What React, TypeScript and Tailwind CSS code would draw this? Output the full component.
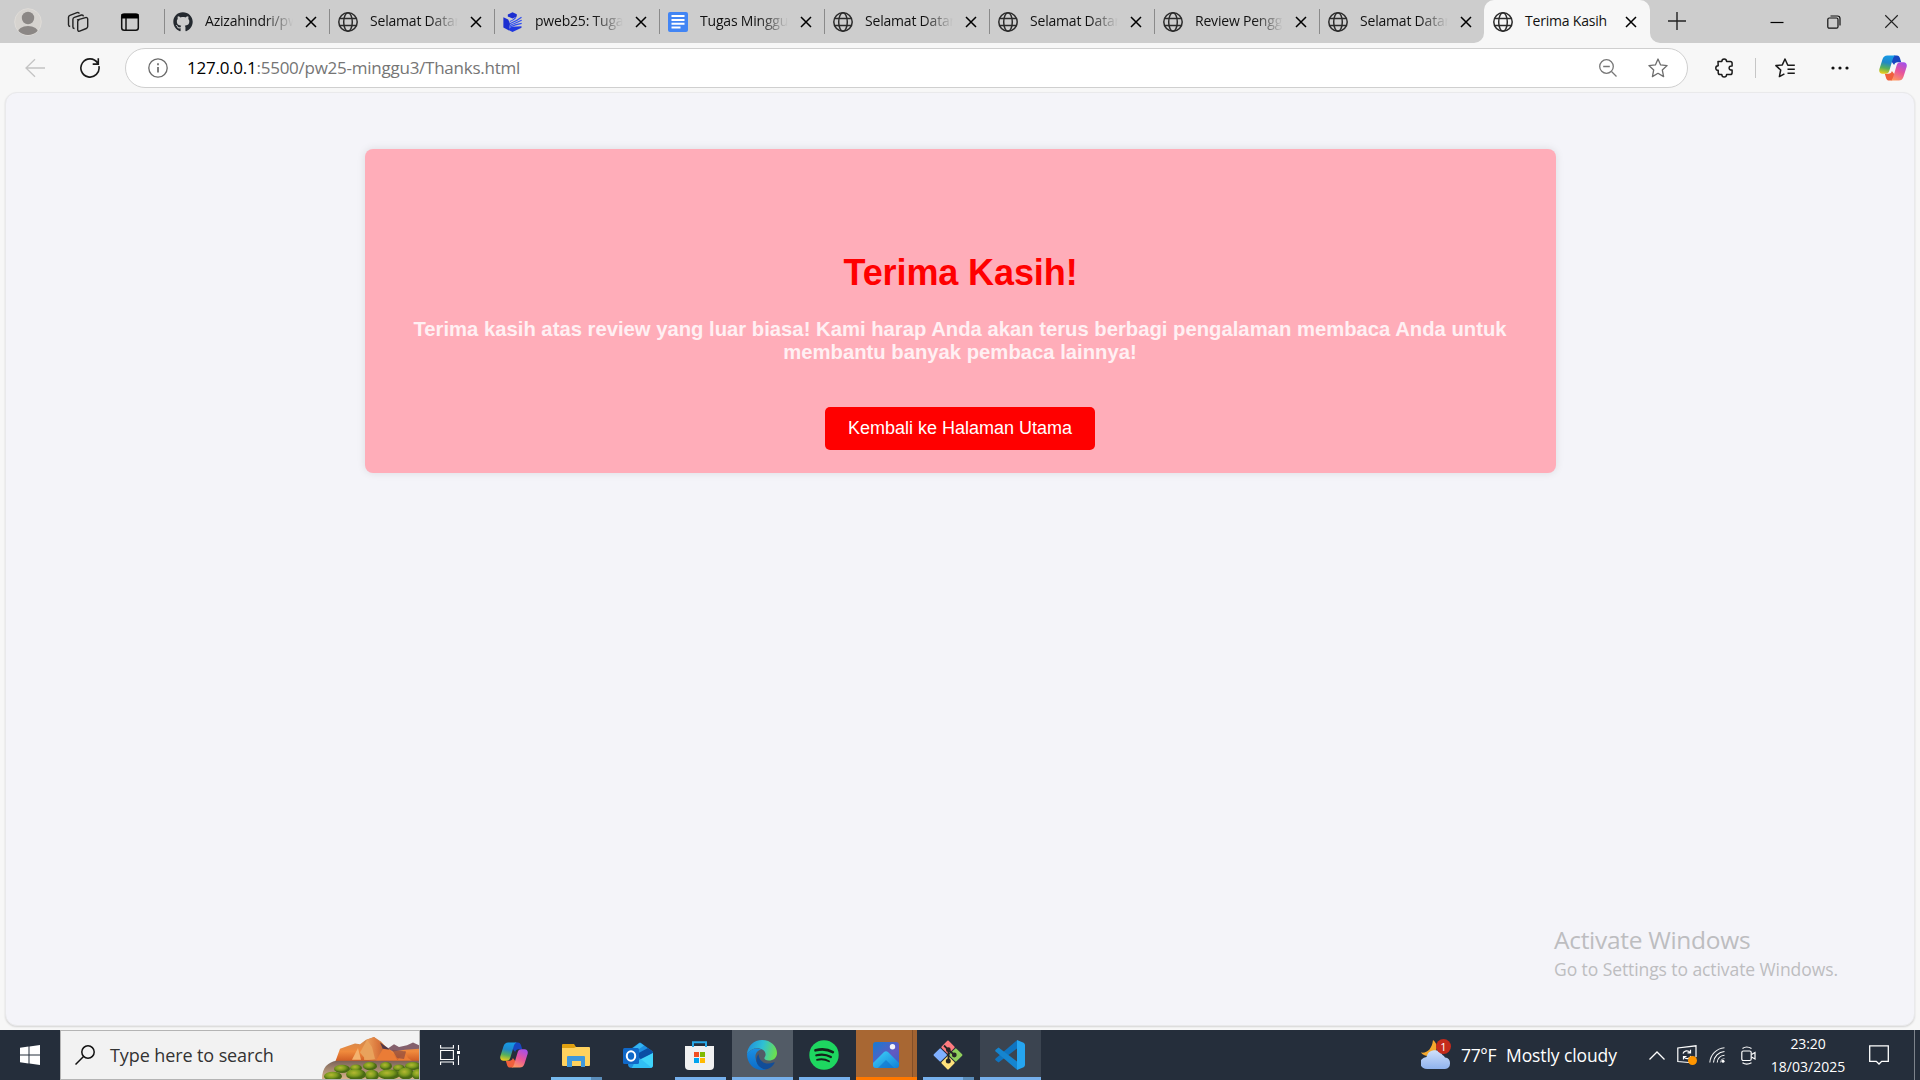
import React from "react";
import { FaGithub } from "react-icons/fa";

type P = { className?: string };

const Globe = () => (
  <svg viewBox="0 0 20 20" className="size-5" fill="none" stroke="#2b2b2b" strokeWidth="1.5">
    <circle cx="10" cy="10" r="9.2" />
    <ellipse cx="10" cy="10" rx="4.3" ry="9.2" />
    <path d="M1.7 6.6h16.6M1.7 13.4h16.6" />
  </svg>
);

const Pweb = () => (
  <svg viewBox="0 0 20 20" className="size-5">
    <path d="M4.800 2.500 9.500.2l4.300 2v2.300L9.500 6.500l-4.700-2z" fill="#1c2fd0" />
    <path d="M.4 5.200 5.200 7.500 7 11.500l-1 7L.4 15.500z" fill="#1c2fd0" />
    <path d="M6.500 16 9 14.800l9.500-.6v1.500L9.500 20l-4-2z" fill="#2038e0" />
    <g stroke="#2f4df2" fill="none" strokeWidth="1.200">
      <path d="M6.800 9.500C9 8.800 11 7.500 13 5.300" /><path d="M6.800 11.800C11 10 15 8 18.500 5.200" /><path d="M6.800 13.600C11 11.500 15 10 18.700 8.300" /><path d="M6.500 15.200C11 13 15 12 18.700 11.400" />
    </g>
  </svg>
);

const Docs = () => (
  <svg viewBox="0 0 20 20" className="size-5">
    <rect width="20" height="20" rx="2" fill="#4285f4" />
    <path d="M3.500 4h13M3.500 8h13M3.500 11.700h13M3.500 15.500h9" stroke="#fff" strokeWidth="1.900" />
  </svg>
);

const Cross = ({ className = "" }: P) => (
  <svg viewBox="0 0 12 12" className={className} fill="none" stroke="currentColor" strokeWidth="1.500">
    <path d="m1 1 10 10M11 1 1 11" />
  </svg>
);

const CopilotIcon = ({ id, className = "" }: { id: string; className?: string }) => (
  <svg viewBox="0 0 28 26" className={className}>
    <defs>
      <linearGradient id={id + "a"} x1=".55" y1="0" x2=".35" y2="1">
        <stop offset="0" stopColor="#159be8" />
        <stop offset=".4" stopColor="#2088c8" />
        <stop offset=".7" stopColor="#56b05c" />
        <stop offset="1" stopColor="#e8cc1c" />
      </linearGradient>
      <linearGradient id={id + "b"} x1=".75" y1="0" x2=".3" y2="1">
        <stop offset="0" stopColor="#a550e8" />
        <stop offset=".5" stopColor="#e8559a" />
        <stop offset="1" stopColor="#ff9860" />
      </linearGradient>
    </defs>
    <path d="M15 .4h2.800c1.900 0 2.700 1.200 3.200 2.900l1.200 4h-3.600c-2 0-2.900 1-3.500 2.800L12 6z" fill="#1846c0" />
    <path d="M13 25.600h-2.800c-1.900 0-2.700-1.200-3.200-2.900l-1.200-4h3.600c2 0 2.900-1 3.500-2.800L16 20z" fill="#f0603c" />
    <path d="M8.200.4h8.600c-1.600.3-2.400 1.600-3 3.600l-3.400 11.400c-.7 2.200-1.700 3.300-3.900 3.300H3.400C.8 18.700-.3 16.600.4 14L3.600 4C4.400 1.600 5.900.4 8.200.4z" fill={`url(#${id}a)`} />
    <path d="M19.800 25.600h-8.600c1.600-.3 2.400-1.600 3-3.600l3.400-11.400c.7-2.200 1.700-3.300 3.900-3.300h3.100c2.600 0 3.700 2.100 3 4.700L24.400 22c-.8 2.400-2.300 3.600-4.600 3.600z" fill={`url(#${id}b)`} />
  </svg>
);

type TabInfo = { title: string; icon: React.ReactNode; active?: boolean };
const tabs: TabInfo[] = [
  { title: "Azizahindri/pw", icon: <FaGithub size={20} color="#24292f" /> },
  { title: "Selamat Datan", icon: <Globe /> },
  { title: "pweb25: Tugas", icon: <Pweb /> },
  { title: "Tugas Minggu", icon: <Docs /> },
  { title: "Selamat Datan", icon: <Globe /> },
  { title: "Selamat Datan", icon: <Globe /> },
  { title: "Review Pengg", icon: <Globe /> },
  { title: "Selamat Datan", icon: <Globe /> },
  { title: "Terima Kasih", icon: <Globe />, active: true },
];

const Tab = ({ title, icon, active }: TabInfo) => (
  <div className={active ? "relative flex h-[43px] w-[166px] shrink-0 items-center rounded-t-[10px] bg-[#f7f7f7]" : "flex h-[43px] w-[165px] shrink-0 items-center"}>
    <div className={active ? "h-6 w-px" : "h-[25px] w-px bg-[#8a8a8a]"} />
    {active && (
      <>
        <svg viewBox="0 0 10 10" className="absolute bottom-0 -left-2.5 size-2.5"><path d="M10 0v10H0A10 10 0 0 0 10 0z" fill="#f7f7f7" /></svg>
        <svg viewBox="0 0 10 10" className="absolute bottom-0 -right-2.5 size-2.5"><path d="M0 0v10h10A10 10 0 0 1 0 0z" fill="#f7f7f7" /></svg>
      </>
    )}
    <div className="ml-2 size-5 shrink-0">{icon}</div>
    <div className={active
      ? "mb-0.5 ml-3 w-[89px] text-[14px] tracking-[-0.2px] whitespace-nowrap text-[#111]"
      : "mb-0.5 ml-3 w-[89px] overflow-hidden text-[14px] tracking-[-0.2px] whitespace-nowrap text-[#111] [mask-image:linear-gradient(to_right,black_66%,transparent_99%)]"}>
      {title}
    </div>
    <Cross className="ml-[11px] size-[12px] shrink-0" />
  </div>
);

const TabStrip = () => (
  <div className="flex h-[43px] items-center bg-[#cdcdcd]">
    <div className="flex w-[164px] shrink-0 items-center">
      <svg viewBox="0 0 28 28" className="ml-3.5 size-7">
        <defs><clipPath id="avatar"><circle cx="14" cy="14" r="13" /></clipPath></defs>
        <circle cx="14" cy="14" r="13.300" fill="#d6d3cf" stroke="#dfdcd8" />
        <g clipPath="url(#avatar)" fill="#8b8785"><circle cx="14" cy="10" r="6.200" /><ellipse cx="14" cy="25" rx="10.500" ry="7" /></g>
      </svg>
      <svg viewBox="0 0 22 22" className="ml-[25px] size-[22px]" fill="none" stroke="#222" strokeWidth="1.400" strokeLinejoin="round">
        <path d="m10.500 8.800 8-2.200q2-.4 2.200 1.400v7.600q0 1.400-1.400 1.900l-6.600 2.700q-1.800.5-2-1.400v-8q0-1.500 1.400-2z" />
        <path d="M7.500 17.500q-1.600 0-1.600-1.500V8.500q0-1.600 1.500-2.100L14.500 4q1.700-.3 2 1.300" />
        <path d="M3.200 15.500q-1.700-.2-1.700-1.700V6.300q0-1.500 1.400-2L10 1.600q1.800-.5 2.400 1" />
      </svg>
      <svg viewBox="0 0 20 20" className="ml-[31px] size-5" fill="none" stroke="#111" strokeWidth="1.500">
        <rect x="1.700" y="2" width="16.600" height="16.300" rx="2.500" /><path d="M1.500 2h17v4.500h-17z" fill="#000" stroke="none" /><path d="M6 6v12" />
      </svg>
    </div>
    {tabs.map((t, i) => <Tab key={i} {...t} />)}
    <svg viewBox="0 0 18 18" className="mb-0.5 ml-[18px] size-[18px]" stroke="#222" strokeWidth="1.400"><path d="M9 0v18M0 9h18" /></svg>
    <div className="ml-auto flex items-center pr-[21px]">
      <svg viewBox="0 0 14 14" className="size-3.5" stroke="#000" strokeWidth="1.200"><path d="M.5 7.500h13" /></svg>
      <svg viewBox="0 0 14 14" className="ml-[43px] size-3.5" fill="none" stroke="#111" strokeWidth="1.200">
        <rect x=".8" y="3" width="10.200" height="10.200" rx="1.500" /><path d="M3.500 1h7q2.500 0 2.500 2.500v7" />
      </svg>
      <Cross className="ml-[43px] size-[15px] text-[#222] [stroke-width:0.9]" />
    </div>
  </div>
);

const Toolbar = () => (
  <div className="flex h-[49px] items-center bg-[#f7f7f7]">
    <svg viewBox="0 0 20 20" className="ml-[25px] size-5" fill="none" stroke="#c4c4c4" strokeWidth="1.300"><path d="M20 10H1M10 1.300 1 10l9 8.700" /></svg>
    <svg viewBox="0 0 20 20" className="ml-[35px] size-5" fill="none" stroke="#1a1a1a" strokeWidth="1.600"><path d="M18.900 8.200A9.100 9.100 0 1 1 17.600 5M18.300.3v5.800h-5.600" /></svg>
    <div className="ml-[25px] flex h-10 w-[1563px] items-center rounded-full border border-[#cfcfcf] bg-white">
      <svg viewBox="0 0 20 20" className="ml-[22px] size-5" fill="none" stroke="#6a6a6a" strokeWidth="1.300"><circle cx="10" cy="10" r="9.200" /><path d="M10 9v5.500M10 5.200v2" strokeWidth="1.700" /></svg>
      <div className="ml-[19px] text-[17px] tracking-[-0.25px] whitespace-nowrap text-[#757575]"><span className="text-black">127.0.0.1</span>:5500/pw25-minggu3/Thanks.html</div>
      <svg viewBox="0 0 18 18" className="ml-auto size-[18px]" fill="none" stroke="#777" strokeWidth="1.300"><circle cx="7.500" cy="7.500" r="6.800" /><path d="M4.200 7.500h6.600M12.500 12.500l5 5" /></svg>
      <svg viewBox="0 0 20 20" className="mr-[19px] ml-[31px] size-5" fill="none" stroke="#6d6d6d" strokeWidth="1.300" strokeLinejoin="round"><path d="m10 1 2.600 5.900 6.500.7-4.800 4.400 1.300 6.600L10 15.300l-5.600 3.300L5.700 12 .9 7.600l6.500-.7z" /></svg>
    </div>
    <svg viewBox="0 0 20 20" className="ml-[27px] size-5" fill="none" stroke="#1a1a1a" strokeWidth="1.500" strokeLinejoin="round">
      <path d="M3 3.500h3.800C6.900 1.800 7.800.9 9.200.9s2.300.9 2.400 2.600h3.700q1.800 0 1.800 1.800v2.600c-2-.1-3 .7-3 2.100s1 2.200 3 2.100v2.600q0 1.800-1.800 1.800h-3.700c-.1 1.700-1 2.600-2.400 2.600s-2.300-.9-2.400-2.600H5q-1.800 0-1.800-1.800v-2.400C1.500 12.300.8 11.400.8 10s.8-2.300 2.400-2.300z" />
    </svg>
    <div className="ml-5 h-5 w-px bg-[#c6c6c6]" />
    <svg viewBox="0 0 20 20" className="ml-[19px] size-5" fill="none" stroke="#1a1a1a" strokeWidth="1.500" strokeLinejoin="round"><path d="M19.800 7.200h-7L10 1 7.300 6.900l-6.400.7 4.800 4.400-1.300 6.600 5-2.800M12.500 11.200h7.300M12.500 15.200h7.300" /></svg>
    <svg viewBox="0 0 18 4" className="ml-9 h-1 w-[18px]" fill="#111"><circle cx="2" cy="2" r="1.600" /><circle cx="9" cy="2" r="1.600" /><circle cx="16" cy="2" r="1.600" /></svg>
    <CopilotIcon id="cpt" className="ml-[30px] h-[26px] w-7" />
  </div>
);

const Page = () => (
  <div className="flex-1 bg-[#f7f7f7] px-[5px] pb-1">
    <div className="flex h-full flex-col rounded-xl border border-[#e9e9eb] bg-[#f4f4f9] shadow-[0_1px_2px_rgba(0,0,0,0.14)]">
      <main className="mx-auto mt-14 flex h-[324px] w-[1191px] flex-col items-center rounded-lg bg-[#ffadb9] px-10 pt-[103px] text-center font-['Liberation_Sans',Arial,sans-serif] shadow-[0_0_9px_rgba(0,0,0,0.1)]">
        <h1 className="pl-px text-[36px] leading-[41px] font-bold tracking-[-0.1px] text-[#ff0000]">Terima Kasih!</h1>
        <p className="mt-[25px] text-[20.25px] leading-[23px] font-bold text-[#fff0f3]">
          Terima kasih atas review yang luar biasa! Kami harap Anda akan terus berbagi pengalaman membaca Anda untuk<br />membantu banyak pembaca lainnya!
        </p>
        <button className="mt-[43px] h-[43px] w-[270px] rounded-[5px] bg-[#ff0000] text-[18px] text-white">Kembali ke Halaman Utama</button>
      </main>
      <div className="mt-auto mr-[76px] mb-[43px] w-[284px] self-end whitespace-nowrap text-[#bdbdc0]">
        <div className="mb-px text-[24.5px] leading-[33px] tracking-[-0.3px]">Activate Windows</div>
        <div className="text-[17.500px] leading-[25px] tracking-[-0.08px]">Go to Settings to activate Windows.</div>
      </div>
    </div>
  </div>
);

const Mountains = () => (
  <svg viewBox="0 0 97 46" preserveAspectRatio="none" className="ml-auto h-[42px] w-[97px] self-end">
    <defs>
      <linearGradient id="rock" x1="0" y1="0" x2="0" y2="1"><stop offset="0" stopColor="#c98a55" /><stop offset=".55" stopColor="#f08a3c" /><stop offset="1" stopColor="#c8501e" /></linearGradient>
      <linearGradient id="rock2" x1="0" y1="0" x2="1" y2="0"><stop offset="0" stopColor="#f0a860" /><stop offset=".6" stopColor="#d9743a" /><stop offset="1" stopColor="#a8603c" /></linearGradient>
      <linearGradient id="earth" x1="0" y1="0" x2="0" y2="1"><stop offset="0" stopColor="#7a6258" /><stop offset="1" stopColor="#d8b48c" /></linearGradient>
      <radialGradient id="bush" cx=".4" cy=".35"><stop offset="0" stopColor="#b5b832" /><stop offset=".6" stopColor="#7d9c1e" /><stop offset="1" stopColor="#4a6a14" /></radialGradient>
    </defs>
    <path d="M64 14 72 8l5 3 8-2 6-3 6 3v9H64z" fill="#84606c" />
    <path d="M13 28 18 13l7-3 8-3 5 1 6-5 8-3 7 5 6 7 6 4 12-2 14-1v16z" fill="url(#rock)" />
    <path d="M42 25 45 3l7-3 8 7 6 8-7 11z" fill="url(#rock2)" />
    <path d="m45 3 5 8 3 13-9 1-6-8z" fill="#e9a25c" /><path d="m58 6 8 6 3 5-7-1z" fill="#533846" />
    <path d="m54 26 7-13 7 1 8 12zM75 26l8-11 3 8 4 3z" fill="#ea7c36" />
    <path d="m70 14 5 9 7 1 2-8z" fill="#8c4c40" opacity=".7" />
    <path d="M30 25 36 12l3 13z" fill="#f4b26e" />
    <path d="M0 46C0 33 6 28 14 26h83v20z" fill="url(#earth)" />
    <g fill="url(#bush)">
      <ellipse cx="20" cy="35" rx="8" ry="4.500" /><ellipse cx="48" cy="32" rx="7" ry="4.500" /><ellipse cx="64" cy="32" rx="6" ry="4.500" /><ellipse cx="91" cy="32" rx="8" ry="4.500" /><ellipse cx="34" cy="34" rx="6" ry="4" /><ellipse cx="77" cy="34" rx="6" ry="4" />
      <ellipse cx="11" cy="43" rx="9" ry="5" /><ellipse cx="50" cy="42" rx="7" ry="6" /><ellipse cx="34" cy="41" rx="10" ry="6" /><ellipse cx="67" cy="41" rx="11" ry="5.500" /><ellipse cx="84" cy="40" rx="8" ry="6.500" /><ellipse cx="96" cy="41" rx="6" ry="6" />
    </g>
  </svg>
);

const TaskView = () => (
  <svg viewBox="0 0 20 20" className="size-5" fill="none" stroke="#fff" strokeWidth="1.100">
    <path d="M.6 5.500h12.800v9H.6zM.6 0v3h12.800V0M.6 20v-3h12.800v3M18.500 0v5M18.500 10.500V20" /><path d="M17 6h3v3h-3z" fill="#fff" stroke="none" />
  </svg>
);

const Explorer = () => (
  <svg viewBox="0 0 28 24" className="h-6 w-7">
    <path d="M1 1h11l2 3v6H0V2q0-1 1-1z" fill="#e0a010" /><path d="M0 5h12l2-1h13q1 0 1 1v17q0 1-1 1H1q-1 0-1-1z" fill="#ffd25e" />
    <path d="M5 24V14q0-1 1-1h16q1 0 1 1v10h-4v-6h-9v6z" fill="#3f98dc" />
  </svg>
);

const Outlook = () => (
  <svg viewBox="0 0 30 28" className="h-7 w-[30px]">
    <path d="M5 9 16 1q1-.8 2 0l11 8q1 1 1 2v12q0 3-3 3H9q-4 0-4-4z" fill="#1f8fe0" />
    <path d="M5 10 16 1.500q1-.8 2 0l3 2L5 15z" fill="#34b4f0" /><path d="M10 14 25 6l4 3q1 1 1 2L13 21z" fill="#0a4ea4" /><path d="m12 20 18-9v12q0 3-3 3H9z" fill="#40d4fa" /><path d="m14 14 15 12H9z" fill="#28b0f0" opacity=".6" />
    <rect y="6" width="16" height="16" rx="1.500" fill="#1068c8" /><ellipse cx="8" cy="14" rx="4.200" ry="4.700" fill="none" stroke="#fff" strokeWidth="2" />
  </svg>
);

const Store = () => (
  <svg viewBox="0 0 29 29" className="size-[29px]">
    <path d="M0 5h29v20q0 4-4 4H4q-4 0-4-4z" fill="#f1f1f1" /><path d="M8 6V1.200h13V6" fill="none" stroke="#28a8e8" strokeWidth="2" />
    <path d="M9 11h5v5H9z" fill="#f25022" /><path d="M15 11h5v5h-5z" fill="#7fba00" /><path d="M9 17h5v5H9z" fill="#00a4ef" /><path d="M15 17h5v5h-5z" fill="#ffb900" />
  </svg>
);

const Edge = () => (
  <svg viewBox="0 0 30 30" className="size-[30px]">
    <defs>
      <linearGradient id="e1" x1="0" y1=".3" x2="1" y2=".5"><stop offset="0" stopColor="#2090dc" /><stop offset=".5" stopColor="#2fc0d4" /><stop offset="1" stopColor="#6ce04c" /></linearGradient>
      <linearGradient id="e2" x1="0" y1="0" x2="0" y2="1"><stop offset="0" stopColor="#1a90e4" /><stop offset="1" stopColor="#0c6cc8" /></linearGradient>
    </defs>
    <path d="M0 14C.5 6 7 0 15 0c9 0 15 6.500 15 13 0 5-4 7.500-8 7.500-4.500 0-5.500-1.800-4-3.800 1.200-2 .6-5-1.800-6.700C11 6.500 4 8 0 14z" fill="url(#e1)" />
    <path d="M0 14c3-5 10-7 14.500-4.600C10 10 8 14 8.500 18c.8 6 5.500 10.500 10.500 11.400C9 32 0 25 0 14z" fill="url(#e2)" />
    <path d="M11.500 14C6 21 12 29.500 19 29.300c4-.6 7.200-3.400 8.500-6.300.3-.8-.3-1-1-.6C19 25.500 12 22 11.500 14z" fill="#114d98" />
  </svg>
);

const Spotify = () => (
  <svg viewBox="0 0 30 30" className="size-[30px]" fill="none" stroke="#14231a" strokeLinecap="round">
    <circle cx="15" cy="15" r="14.700" fill="#1ed760" stroke="none" />
    <path d="M6.500 10.300c6-1.600 12.500-1 17.300 1.800" strokeWidth="2.700" /><path d="M7.300 15.300c5-1.300 10.500-.7 14.600 1.700" strokeWidth="2.200" /><path d="M8 19.800c4.200-1 8.500-.5 12 1.500" strokeWidth="1.900" />
  </svg>
);

const Photos = () => (
  <svg viewBox="0 0 26 26" className="size-[26px]">
    <defs><linearGradient id="ph" x1="0" y1="0" x2="1" y2="1"><stop offset="0" stopColor="#147cd2" /><stop offset=".6" stopColor="#6458c0" /><stop offset="1" stopColor="#2868c8" /></linearGradient>
      <linearGradient id="ph2" x1="0" y1="0" x2="1" y2="1"><stop offset="0" stopColor="#40d4fa" /><stop offset="1" stopColor="#1180d8" /></linearGradient></defs>
    <rect width="26" height="26" rx="3" fill="url(#ph)" /><path d="M0 21 11 10q2-1.700 4 0l11 11v2q0 3-3 3H3q-3 0-3-3z" fill="url(#ph2)" /><path d="m5 26 8-8 8 8z" fill="#1070cc" opacity=".6" /><circle cx="19.500" cy="4.800" r="2.700" fill="#f4f4fb" />
  </svg>
);

const Git = () => (
  <svg viewBox="0 0 30 30" className="size-[30px]">
    <g transform="rotate(45 15 15)"><rect x="4.500" y="4.500" width="10" height="10" rx="1" fill="#ff7c80" /><rect x="15.500" y="4.500" width="10" height="10" rx="1" fill="#8fce5c" /><rect x="4.500" y="15.500" width="10" height="10" rx="1" fill="#80b0ff" /><rect x="15.500" y="15.500" width="10" height="10" rx="1" fill="#ffe27c" /></g>
    <path d="M11 5.500 15.500 10v11M15.500 10l6 5" stroke="#262626" strokeWidth="1.800" fill="none" /><g fill="#262626"><circle cx="15.300" cy="9.700" r="2.400" /><circle cx="21.300" cy="15" r="2.400" /><circle cx="15.300" cy="21" r="2.500" /></g>
  </svg>
);

const VSCode = () => (
  <svg viewBox="0 0 30 30" className="size-[30px]">
    <path d="M22 8.500 3.500 22.500.6 20.300q-.8-.8 0-1.700L22 .2z" fill="#0f74c0" /><path d="M22 21.500 3.500 7.500.6 9.700q-.8.800 0 1.700L22 29.800z" fill="#1585cf" /><path d="M22 0 28.600 2.800Q30 3.500 30 5v20q0 1.500-1.400 2.200L22 30z" fill="#25a5f0" />
  </svg>
);

const Line = ({ className = "" }: P) => <div className={"h-[3px] " + className} />;

const Weather = () => (
  <div className="relative h-[30px] w-[30px]">
    <svg viewBox="0 0 30 30" className="size-[30px]">
      <defs><linearGradient id="cl" x1="0" y1="0" x2="0" y2="1"><stop offset="0" stopColor="#cfe0fa" /><stop offset="1" stopColor="#8fb2ee" /></linearGradient></defs>
      <path d="M12 0c5 3 5 12-1 15C7 17 2 15.500 0 12.500 6 13.500 11 9 12 0z" fill="#f5a82c" />
      <path d="M7 29a7 6 0 0 1-1.500-12A8.500 8.500 0 0 1 21.500 15 6.300 6.300 0 0 1 24 17.500 5.800 5.800 0 0 1 24 29z" fill="url(#cl)" />
    </svg>
    <div className="absolute -top-px right-0 flex size-[15px] items-center justify-center rounded-full bg-[#c42b1c] text-[11px] leading-none text-white">1</div>
  </div>
);

const Taskbar = () => (
  <div className="flex h-[50px] bg-[#252e3b] text-white">
    <div className="flex w-[60px] items-center justify-center">
      <svg viewBox="0 0 20 20" className="size-5" fill="#fff"><path d="M0 2.800 8.500 1.600v7.900H0zM9.500 1.500 20 0v9.500H9.500zM0 10.500h8.500v7.900L0 17.200zM9.500 10.500H20V20L9.500 18.500z" /></svg>
    </div>
    <div className="flex w-[360px] items-center border border-[#b4b4b4] bg-[#f2f2f2]">
      <svg viewBox="0 0 20 20" className="ml-3.5 size-5" fill="none" stroke="#111" strokeWidth="1.500"><circle cx="13" cy="7" r="6.200" /><path d="M8.500 11.500.5 19.500" /></svg>
      <div className="ml-[15px] text-[18px] tracking-[-0.1px] whitespace-nowrap text-[#333]">Type here to search</div>
      <Mountains />
    </div>
    <div className="ml-5 flex items-center"><TaskView /></div>
    <div className="ml-10 flex items-center"><CopilotIcon id="cpb" className="h-[26px] w-7" /></div>
    <div className="ml-[23px] flex w-[51px] flex-col items-center"><div className="flex h-[47px] items-center pr-0.5 pt-0.5"><Explorer /></div><div className="flex w-full"><Line className="w-10 bg-[#76b9ed]" /><Line className="w-[11px] bg-[#5a8cb9]" /></div></div>
    <div className="ml-[21px] flex items-center pt-px"><Outlook /></div>
    <div className="ml-[22px] flex w-[51px] flex-col items-center"><div className="flex h-[47px] items-center pr-0.5 pt-1"><Store /></div><Line className="w-full bg-[#76b0ec]" /></div>
    <div className="ml-1.5 flex w-[61px] flex-col items-center bg-[#525b66]"><div className="flex h-[47px] items-center pt-[3px] pr-px"><Edge /></div><Line className="w-full bg-[#76b0ec]" /></div>
    <div className="ml-1.5 flex w-[51px] flex-col items-center"><div className="flex h-[47px] items-center pt-[3px] pr-0.5"><Spotify /></div><Line className="w-full bg-[#76b0ec]" /></div>
    <div className="ml-1.5 flex w-[61px] flex-col bg-[#a86733]"><div className="flex h-[47px] justify-between"><div className="flex flex-1 items-center pl-[17px] pt-[3px]"><Photos /></div><div className="w-[5px] border-l border-[#834f28] bg-[#a26331]" /></div><Line className="w-full bg-[#ff7800]" /></div>
    <div className="ml-1.5 flex w-[51px] flex-col items-center"><div className="flex h-[47px] items-center pr-0.5 pt-[3px]"><Git /></div><div className="flex w-full"><Line className="w-10 bg-[#76b0ec]" /><Line className="w-[11px] bg-[#5a8cb9]" /></div></div>
    <div className="ml-1.5 flex w-[61px] flex-col items-center bg-[#3b4450]"><div className="flex h-[47px] items-center pt-[3px] pr-0.5"><VSCode /></div><Line className="w-full bg-[#76b0ec]" /></div>

    <div className="ml-auto flex items-center">
      <Weather />
      <div className="ml-2.5 w-[45px] text-[17.500px] tracking-[-0.35px]">77°F</div>
      <div className="w-[112px] text-[17.500px] tracking-[-0.1px] whitespace-nowrap">Mostly cloudy</div>
      <svg viewBox="0 0 16 9" className="ml-[31px] h-[9px] w-4" fill="none" stroke="#fff" strokeWidth="1.300"><path d="m.5 8.500 7.500-7.500 7.500 7.500" /></svg>
      <svg viewBox="0 0 20 20" className="ml-3 size-5" fill="none" stroke="#fff" strokeWidth="1.200">
        <path d="M12 17.500.8 16.500V3L19 .8V12" /><path d="M6 8.500c1-3 5-3.500 7-1.200M13.500 4.800v3h-3M14 11c-1 3-5 3.500-7 1.200M6.500 14.500v-3h3" /><circle cx="15.500" cy="15.500" r="4.500" fill="#ff9500" stroke="none" />
      </svg>
      <svg viewBox="0 0 16 16" className="ml-3 size-4" fill="none" stroke="#fff" strokeWidth="1.100">
        <path d="M.8 15.500C1.500 7.500 7.500 1.500 15.500.8" opacity=".9" /><path d="M4.500 15.500c.5-6 5-10.500 11-11" /><path d="M8.200 15.500c.3-4 3.300-7 7.300-7.300" /><path d="M11.500 15.500c.2-2 2-3.800 4-4" opacity=".6" /><circle cx="14" cy="14.200" r="1.500" fill="#fff" stroke="none" />
      </svg>
      <svg viewBox="0 0 15 19" className="ml-4 h-[19px] w-[15px]" fill="none" stroke="#fff" strokeWidth="1.200"><rect x=".8" y="5" width="9.400" height="9.500" rx="1.500" /><path d="m10.500 8.500 3.500-2v6.500l-3.500-2M1.500 2.500q4-3 9 0M1.500 16.800q4 2.600 9 0" /></svg>
      <div className="ml-[14px] flex w-[76px] flex-col items-center text-[14px] leading-[23px] whitespace-nowrap"><span className="tracking-[-0.1px]">23:20</span><span>18/03/2025</span></div>
      <svg viewBox="0 0 20 20" className="ml-[23px] size-5" fill="none" stroke="#fff" strokeWidth="1.300"><path d="M.7.8h18.600v15.500h-6.600L10 19l-2.700-2.700H.7z" /></svg>
      <div className="mr-[5px] ml-[25px] h-[50px] w-px bg-[#7d838b]" />
    </div>
  </div>
);

export default function App() {
  return (
    <div className="flex h-[1080px] w-[1920px] flex-col overflow-hidden font-['Open_Sans','Noto_Sans',sans-serif]">
      <TabStrip />
      <Toolbar />
      <Page />
      <Taskbar />
    </div>
  );
}
